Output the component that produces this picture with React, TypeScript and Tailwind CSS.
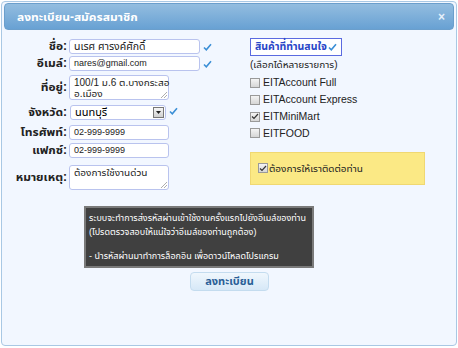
import React from "react";

const Check = () => (
  <svg width="9" height="8" viewBox="0 0 9 8" className="shrink-0">
    <path d="M1 4.5 L3.3 6.8 L8 1.2" stroke="#3b8fd6" strokeWidth="1.6" fill="none" />
  </svg>
);

const Label = ({ children }: { children: React.ReactNode }) => (
  <div className="w-[67px] shrink-0 text-right font-bold text-[12px] leading-[15px] text-[#222] pr-[2px]">{children}</div>
);

const Box = ({ checked }: { checked?: boolean }) => (
  <span className="w-[10px] h-[10px] border border-[#9a9a9a] bg-gradient-to-b from-[#f4f4f4] to-[#d6d6d6] flex items-center justify-center shrink-0">
    {checked && (
      <svg width="8" height="7" viewBox="0 0 8 7">
        <path d="M1 3.5 L3 5.5 L7 1" stroke="#333" strokeWidth="1.2" fill="none" />
      </svg>
    )}
  </span>
);

const Grip = () => (
  <svg width="6" height="6" viewBox="0 0 6 6" className="absolute right-[1px] bottom-[1px]">
    <path d="M0 6 L6 0 M3 6 L6 3" stroke="#999" strokeWidth="0.8" />
  </svg>
);

export default function App() {
  const inputCls =
    "h-[15px] border border-[#b9c3ee] rounded-[3px] bg-white px-[4px] text-[9px] leading-[13px] text-[#222] whitespace-nowrap";
  const products = [
    { name: "EITAccount Full", on: false },
    { name: "EITAccount Express", on: false },
    { name: "EITMiniMart", on: true },
    { name: "EITFOOD", on: false },
  ];
  return (
    <div className="w-[458px] h-[348px] bg-white p-[1px] text-[11px] font-['Liberation_Sans','Noto_Sans_Thai_UI','Noto_Sans_Thai',sans-serif]">
      <div className="h-[345px] border border-[#a9c8e4] rounded-[4px] bg-[#f2f7ff] flex flex-col">
        <div className="mx-[2px] mt-[1px] h-[27px] shrink-0 rounded-[4px] border border-[#6b9fcc] bg-gradient-to-b from-[#93bde0] to-[#68a1d3] flex items-center justify-between pl-[12px] pr-[8px]">
          <span className="text-white font-bold text-[12px]">ลงทะเบียน-สมัครสมาชิก</span>
          <span className="text-[#e6f0fa] font-bold text-[12px]">×</span>
        </div>
        <div className="flex pt-[9px]">
          <div className="flex flex-col w-[240px]">
            <div className="flex items-center h-[15px]">
              <Label>ชื่อ:</Label>
              <div className={`${inputCls} w-[131px]`}>
                <span className="text-[10.5px]">นเรศ ศารงค์ศักดิ์</span>
              </div>
              <span className="ml-[3px]"><Check /></span>
            </div>
            <div className="flex items-center h-[15px] mt-[2px]">
              <Label>อีเมล์:</Label>
              <div className={`${inputCls} w-[131px]`}>nares@gmail.com</div>
              <span className="ml-[3px]"><Check /></span>
            </div>
            <div className="flex items-center h-[25px] mt-[4px]">
              <Label>ที่อยู่:</Label>
              <div className="relative w-[100px] h-[25px] border border-[#b9c3ee] rounded-[3px] bg-white px-[4px] pt-[1px] text-[10px] leading-[11px] text-[#222]">
                <div className="whitespace-nowrap">100/1 ม.6 ต.บางกระสอ</div>
                <div>อ.เมือง</div>
                <Grip />
              </div>
            </div>
            <div className="flex items-center h-[15px] mt-[5px]">
              <Label>จังหวัด:</Label>
              <div className="w-[96px] h-[15px] border border-[#b9c3ee] rounded-[3px] bg-white flex items-center justify-between pl-[4px] pr-[1px] ml-[1px]">
                <span className="text-[11px] leading-[13px]">นนทบุรี</span>
                <span className="w-[11px] h-[11px] border border-[#777] bg-gradient-to-b from-[#f6f6f6] to-[#d0d0d0] flex items-center justify-center">
                  <svg width="5" height="3" viewBox="0 0 5 3"><path d="M0 0 H5 L2.5 3 Z" fill="#222" /></svg>
                </span>
              </div>
              <span className="ml-[3px] -mt-[4px]"><Check /></span>
            </div>
            <div className="flex items-center h-[15px] mt-[5px]">
              <Label>โทรศัพท์:</Label>
              <div className={`${inputCls} w-[100px]`}>02-999-9999</div>
            </div>
            <div className="flex items-center h-[15px] mt-[3px]">
              <Label>แฟกซ์:</Label>
              <div className={`${inputCls} w-[100px]`}>02-999-9999</div>
            </div>
            <div className="flex items-center h-[25px] mt-[7px]">
              <Label>หมายเหตุ:</Label>
              <div className="relative w-[100px] h-[25px] border border-[#b9c3ee] rounded-[3px] bg-white px-[4px] pt-[1px] text-[10px] leading-[11px] text-[#222]">
                ต้องการใช้งานด่วน
                <Grip />
              </div>
            </div>
          </div>
          <div className="flex flex-col pl-[8px] -mt-[1px]">
            <div className="self-start border border-[#5a6ae0] bg-white px-[4px] h-[18px] flex items-center gap-[1px] text-[#2a47c8] font-bold text-[10.5px]">
              สินค้าที่ท่านสนใจ<Check />
            </div>
            <div className="mt-[1px] text-[#222] text-[10px] leading-[15px]">(เลือกได้หลายรายการ)</div>
            <div className="flex flex-col mt-[3px]">
              {products.map((p) => (
                <div key={p.name} className="flex items-center gap-[3px] h-[16.7px] text-[#222] text-[10.5px]">
                  <Box checked={p.on} />
                  <span>{p.name}</span>
                </div>
              ))}
            </div>
            <div className="mt-[10px] w-[175px] h-[33px] bg-[#fbe985] border border-[#f0d872] flex items-center pl-[7px] gap-[1px] text-[#222] text-[10px]">
              <Box checked />
              <span>ต้องการให้เราติดต่อท่าน</span>
            </div>
          </div>
        </div>
        <div className="mt-[16px] ml-[82px] w-[230px] bg-[#404040] border-2 border-[#7a7a7a] px-[3px] py-[3px] text-white text-[9px] leading-[14px] whitespace-nowrap">
          <div>ระบบจะทำการส่งรหัสผ่านเข้าใช้งานครั้งแรกไปยังอีเมล์ของท่าน</div>
          <div>(โปรดตรวจสอบให้แน่ใจว่าอีเมล์ของท่านถูกต้อง)</div>
          <div className="mt-[10px]">- นำรหัสผ่านมาทำการล็อกอิน เพื่อดาวน์โหลดโปรแกรม</div>
        </div>
        <div className="flex justify-center mt-[4px] pl-[1px]">
          <button className="w-[79px] h-[19px] rounded-[4px] border border-[#c4dcef] bg-gradient-to-b from-[#f0f7fd] to-[#d6e8f7] text-[#2b5f97] font-bold text-[11px]">
            ลงทะเบียน
          </button>
        </div>
      </div>
    </div>
  );
}
